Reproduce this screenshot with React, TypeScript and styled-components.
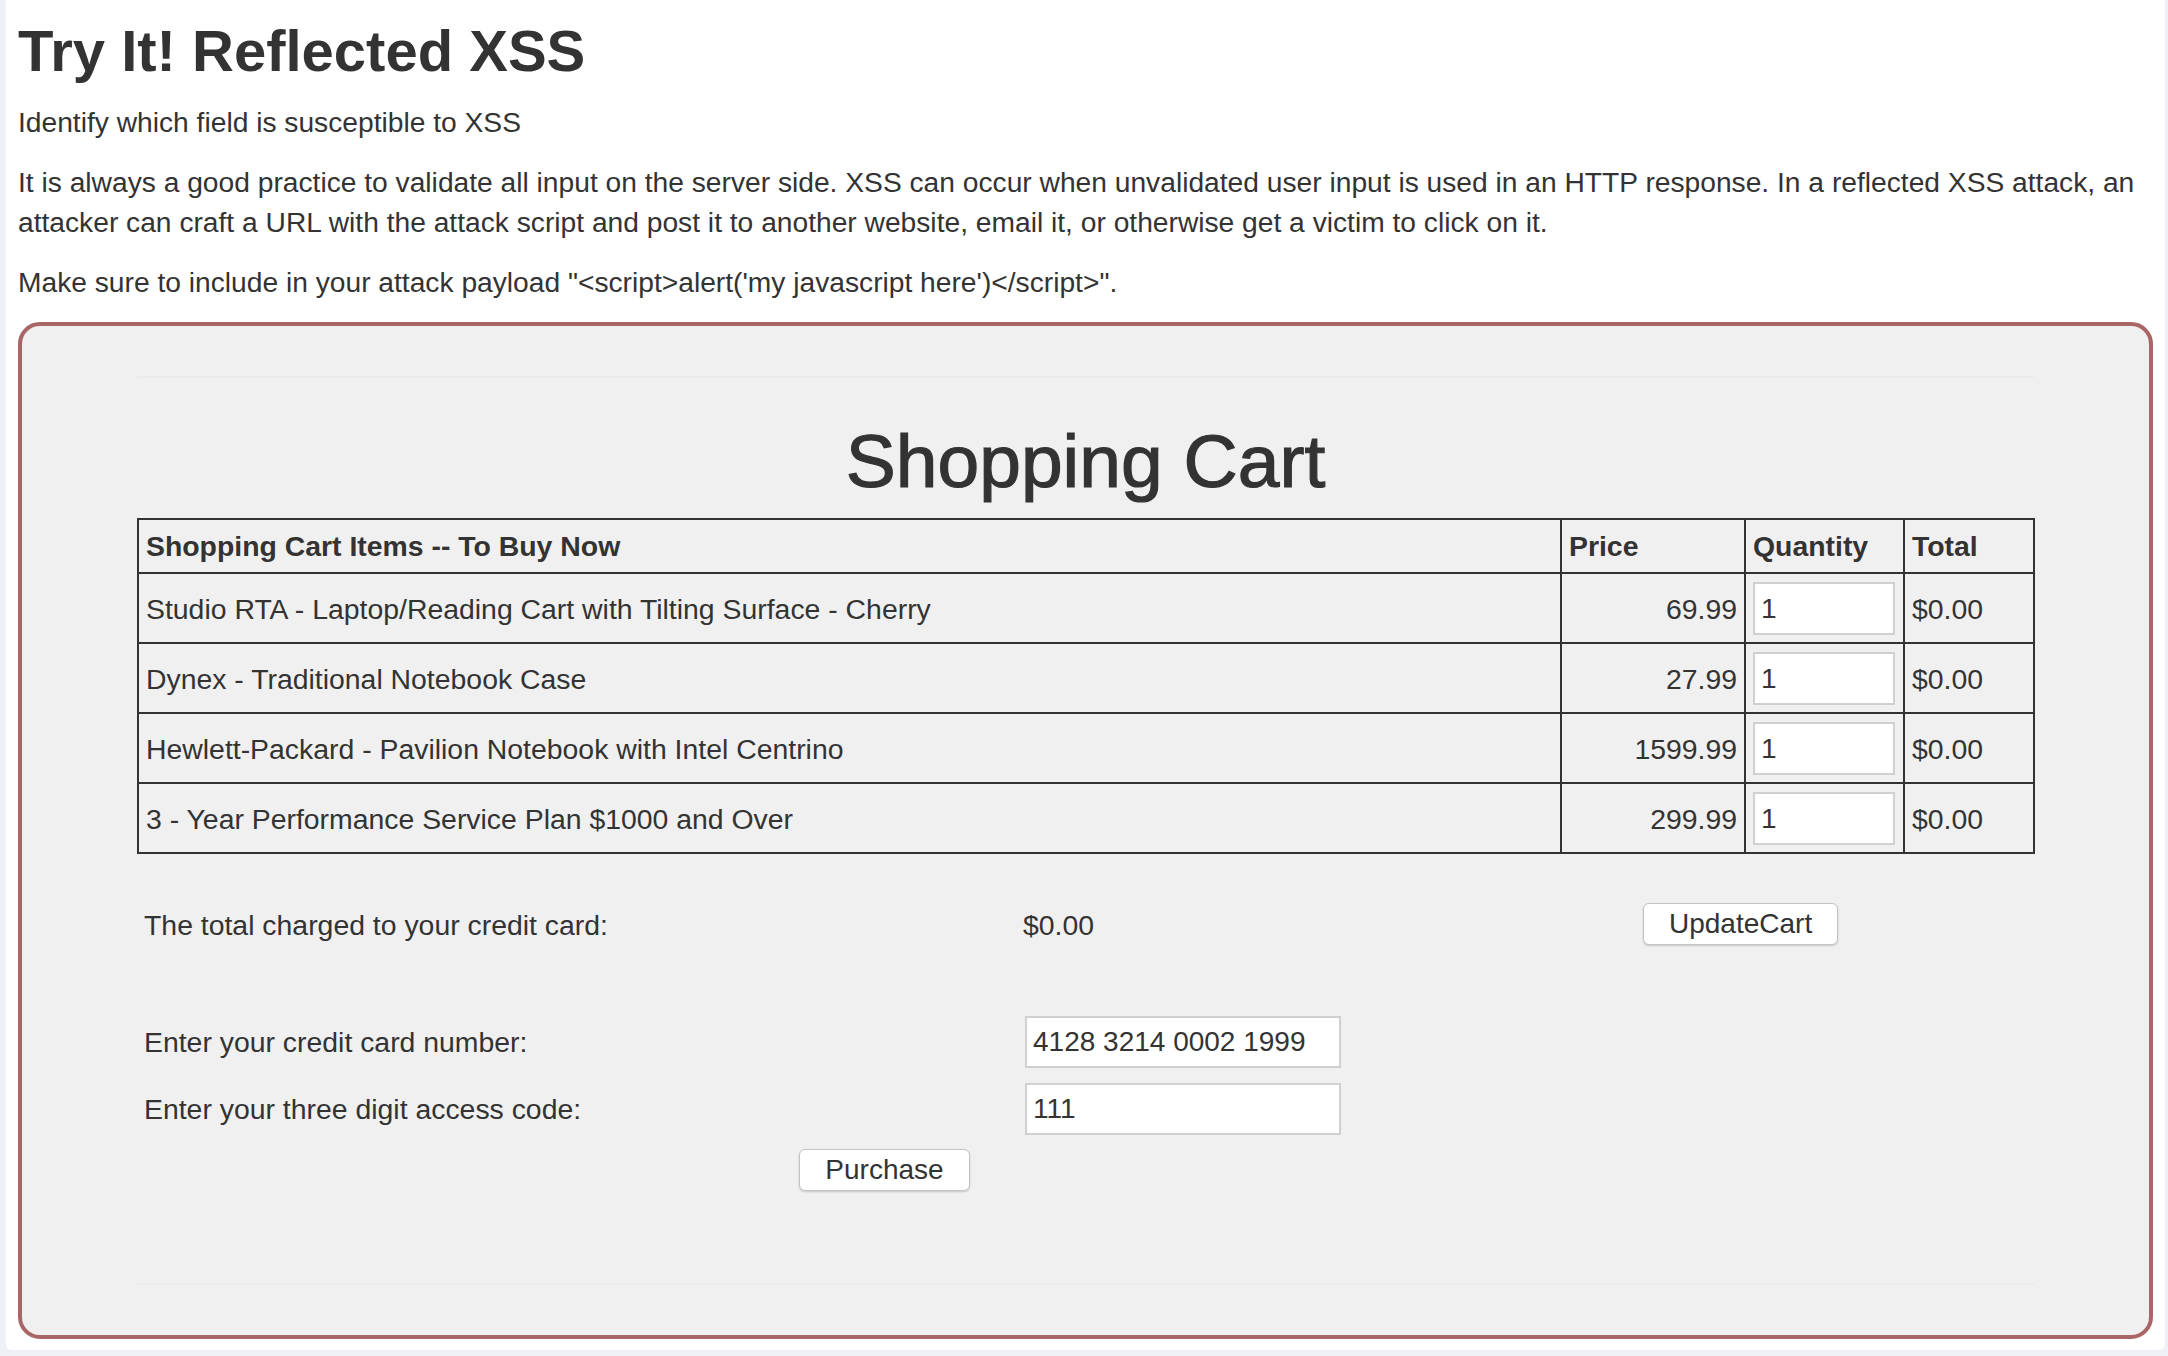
import styled, { createGlobalStyle } from "styled-components"

const GlobalStyle = createGlobalStyle`
    html, body {
        margin: 0;
        padding: 0;
    }
    body {
        background: #eef0f5;
        font-family: "Liberation Sans", Arial, Helvetica, sans-serif;
        color: #333;
    }
    * {
        box-sizing: border-box;
    }
`

const Page = styled.main`
    margin: 0 3px 8px 6px;
    padding: 18px 12px 11px;
    background: #fff;
    border-radius: 0 0 6px 6px;
`

const Title = styled.h2`
    margin: 0 0 18px;
    font-size: 58px;
    line-height: 66px;
    font-weight: 700;
    color: #333;
`

const Text = styled.p`
    margin: 0 0 20px;
    font-size: 28.2px;
    line-height: 40px;
`

const AttackBox = styled.section`
    border: 4px solid #aa6666;
    border-radius: 22px;
    background: #f0f0f0;
    padding: 50px 115px;
`

const Rule = styled.hr<{ $top?: number }>`
    margin: ${p => p.$top ?? 0}px 0 0;
    height: 0;
    border: 0;
    border-top: 2px solid #ebebeb;
`

const CartHeading = styled.h1`
    margin: 48px 0 22px;
    font-size: 75px;
    line-height: 70px;
    font-weight: 400;
    -webkit-text-stroke: 1.2px #333;
    text-align: center;
    color: #333;
`

const CartTable = styled.table`
    width: 100%;
    table-layout: fixed;
    border-collapse: collapse;
    font-size: 28.4px;
    line-height: 40px;
`

const HeadCell = styled.th<{ $width: number }>`
    width: ${p => p.$width}px;
    text-align: left;
    font-weight: 700;
    padding: 6px 7px;
    border: 2px solid #333;
`

const Cell = styled.td<{ $align?: "left" | "right" }>`
    text-align: ${p => p.$align ?? "left"};
    padding: 8px 7px 7px;
    border: 2px solid #333;
    vertical-align: middle;
`

const QtyInput = styled.input`
    display: block;
    width: 142px;
    height: 53px;
    padding: 0 6px;
    border: 2px solid #d0d0d0;
    background: #fff;
    font-family: inherit;
    font-size: 28px;
    color: #333;
`

const Checkout = styled.div`
    display: grid;
    grid-template-columns: 881px 614px 1fr;
    grid-template-rows: 54px 40px 56px 56px 46px;
    row-gap: 11px;
    align-items: center;
    margin-top: 44px;
    font-size: 28.4px;
    line-height: 40px;
`

const Label = styled.div`
    grid-column: 1;
    padding: 0 7px;
`

const Value = styled.div`
    padding: 0 5px;
`

const ButtonCell = styled.div<{ $span?: boolean }>`
    padding-left: ${p => (p.$span ? 0 : 11)}px;
    margin-top: -3px;
    ${p => p.$span && "grid-column: 1 / 3; justify-self: center;"}
`

const Spacer = styled.div`
    grid-column: 1 / -1;
`

const FieldInput = styled.input`
    display: block;
    width: 316px;
    height: 52px;
    margin-left: 7px;
    padding: 0 6px;
    border: 2px solid #d0d0d0;
    background: #fff;
    font-family: inherit;
    font-size: 28px;
    color: #333;
`

const Button = styled.button`
    display: block;
    height: 42px;
    padding: 0 25px;
    font-family: inherit;
    font-size: 28px;
    line-height: 1;
    color: #333;
    background: #fff;
    border: 1px solid #c4c4c4;
    border-radius: 6px;
    box-shadow: 0 1px 2px rgba(0, 0, 0, 0.18);
`

const items = [
    { name: "Studio RTA - Laptop/Reading Cart with Tilting Surface - Cherry", price: "69.99" },
    { name: "Dynex - Traditional Notebook Case", price: "27.99" },
    { name: "Hewlett-Packard - Pavilion Notebook with Intel Centrino", price: "1599.99" },
    { name: "3 - Year Performance Service Plan $1000 and Over", price: "299.99" },
]

export default function App() {
    return (
        <>
            <GlobalStyle />
            <Page>
                <Title>Try It! Reflected XSS</Title>
                <Text>Identify which field is susceptible to XSS</Text>
                <Text>
                    It is always a good practice to validate all input on the server side. XSS can occur when
                    unvalidated user input is used in an HTTP response. In a reflected XSS attack, an attacker can
                    craft a URL with the attack script and post it to another website, email it, or otherwise get a
                    victim to click on it.
                </Text>
                <Text>Make sure to include in your attack payload "&lt;script&gt;alert('my javascript here')&lt;/script&gt;".</Text>

                <AttackBox>
                    <Rule />
                    <CartHeading>Shopping Cart</CartHeading>

                    <CartTable>
                        <thead>
                            <tr>
                                <HeadCell $width={1423}>Shopping Cart Items -- To Buy Now</HeadCell>
                                <HeadCell $width={184}>Price</HeadCell>
                                <HeadCell $width={159}>Quantity</HeadCell>
                                <HeadCell $width={130}>Total</HeadCell>
                            </tr>
                        </thead>
                        <tbody>
                            {items.map(item => (
                                <tr key={item.name}>
                                    <Cell>{item.name}</Cell>
                                    <Cell $align="right">{item.price}</Cell>
                                    <Cell>
                                        <QtyInput type="text" defaultValue="1" />
                                    </Cell>
                                    <Cell>$0.00</Cell>
                                </tr>
                            ))}
                        </tbody>
                    </CartTable>

                    <Checkout>
                        <Label>The total charged to your credit card:</Label>
                        <Value>$0.00</Value>
                        <ButtonCell>
                            <Button type="button">UpdateCart</Button>
                        </ButtonCell>
                        <Spacer />
                        <Label>Enter your credit card number:</Label>
                        <div>
                            <FieldInput type="text" defaultValue="4128 3214 0002 1999" />
                        </div>
                        <Label>Enter your three digit access code:</Label>
                        <div>
                            <FieldInput type="text" defaultValue="111" />
                        </div>
                        <ButtonCell $span>
                            <Button type="submit">Purchase</Button>
                        </ButtonCell>
                    </Checkout>

                    <Rule $top={89} />
                </AttackBox>
            </Page>
        </>
    )
}
